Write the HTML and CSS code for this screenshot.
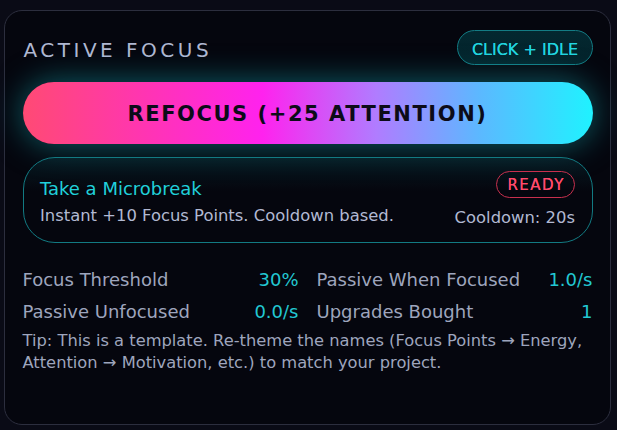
FILE: index.html
```html
<!DOCTYPE html>
<html>
<head>
<meta charset="utf-8">
<link rel="stylesheet" href="styles.css">
</head>
<body>
<div class="card">
  <div class="header">
    <div class="title">ACTIVE FOCUS</div>
    <div class="badge">CLICK + IDLE</div>
  </div>
  <button class="refocus">REFOCUS (+25 ATTENTION)</button>
  <div class="micro">
    <div class="micro-left">
      <div class="micro-title">Take a Microbreak</div>
      <div class="micro-desc">Instant +10 Focus Points. Cooldown based.</div>
    </div>
    <div class="micro-right">
      <div class="ready">READY</div>
      <div class="cooldown">Cooldown: 20s</div>
    </div>
  </div>
  <div class="stats">
    <div class="stat"><span class="label">Focus Threshold</span><span class="value">30%</span></div>
    <div class="stat"><span class="label">Passive When Focused</span><span class="value">1.0/s</span></div>
    <div class="stat"><span class="label">Passive Unfocused</span><span class="value">0.0/s</span></div>
    <div class="stat"><span class="label">Upgrades Bought</span><span class="value">1</span></div>
  </div>
  <div class="tip">Tip: This is a template. Re-theme the names (Focus Points → Energy, Attention → Motivation, etc.) to match your project.</div>
</div>
</body>
</html>
```
FILE: styles.css
```css
* { box-sizing: border-box; }
html, body { margin: 0; padding: 0; }
body {
  background: #0a0b16;
  font-family: "DejaVu Sans", sans-serif;
  width: 617px;
  height: 430px;
  overflow: hidden;
  padding: 10px 0 0 4px;
}
.card {
  width: 607px;
  height: 415px;
  border: 1.5px solid #2c2e3e;
  border-radius: 18px;
  background: #05060e;
  padding: 18.5px 17.5px 0 17.5px;
  display: flex;
  flex-direction: column;
}
.header {
  display: flex;
  justify-content: space-between;
  align-items: flex-start;
  height: 35px;
}
.title {
  margin-top: 8px;
  font-size: 20px;
  line-height: 24px;
  letter-spacing: 3.5px;
  color: #b0b8d2;
  padding-left: 1px;
}
.badge {
  height: 35px;
  padding: 4px 13.5px 0;
  border: 1.5px solid #137c84;
  border-radius: 18px;
  background: linear-gradient(180deg, #032830 0%, #04222a 100%);
  color: #22d6e0;
  font-size: 16px;
  display: flex;
  align-items: center;
  text-shadow: 0 0 0.5px #22d6e0;
}
.refocus {
  margin-top: 17px;
  height: 62px;
  border: none;
  border-radius: 31px;
  background: linear-gradient(90deg, #ff4a74 0%, #ff34b4 22%, #ff22ee 42%, #b07cff 62%, #5cb8ff 80%, #1ff2ff 100%);
  box-shadow: 0 0 32px rgba(20, 190, 200, 0.5);
  font-family: "DejaVu Sans", sans-serif;
  font-size: 21px;
  font-weight: 700;
  letter-spacing: 1.55px;
  color: #0c0b18;
  padding: 3px 0 0 0;
  width: 100%;
}
.micro {
  margin-top: 13px;
  height: 86px;
  border: 1.5px solid #127a82;
  border-radius: 32px;
  background: linear-gradient(180deg, rgba(10, 60, 68, 0.35) 0%, rgba(5, 6, 14, 0) 40%);
  display: flex;
  justify-content: space-between;
  align-items: flex-start;
  padding: 13.5px 16.5px 0 16.5px;
}
.micro-left {
  margin-top: 5.8px;
}
.micro-title {
  font-size: 18px;
  line-height: 24px;
  color: #20d0da;
  margin-bottom: 4.5px;
}
.micro-desc {
  font-size: 16.4px;
  line-height: 22px;
  color: #b2b9d2;
}
.micro-right {
  display: flex;
  flex-direction: column;
  align-items: flex-end;
  gap: 9.3px;
}
.ready {
  height: 27px;
  padding: 1px 9px 0 10.5px;
  border: 1.5px solid #c8304e;
  border-radius: 14px;
  color: #ff4a6c;
  font-size: 15px;
  letter-spacing: 1.5px;
  display: flex;
  align-items: center;
  text-shadow: 0 0 0.5px #ff4a6c;
}
.cooldown {
  font-size: 16.4px;
  line-height: 22px;
  color: #b2b9d2;
}
.stats {
  margin-top: 25px;
  display: grid;
  grid-template-columns: 1fr 1fr;
  column-gap: 18px;
  row-gap: 8px;
}
.stat {
  display: flex;
  justify-content: space-between;
  font-size: 18px;
  line-height: 24px;
}
.label { color: #9ea5bd; }
.value { color: #22c8d2; }
.tip {
  margin-top: 6.4px;
  font-size: 16.3px;
  line-height: 22px;
  color: #9ea5bd;
}
```
